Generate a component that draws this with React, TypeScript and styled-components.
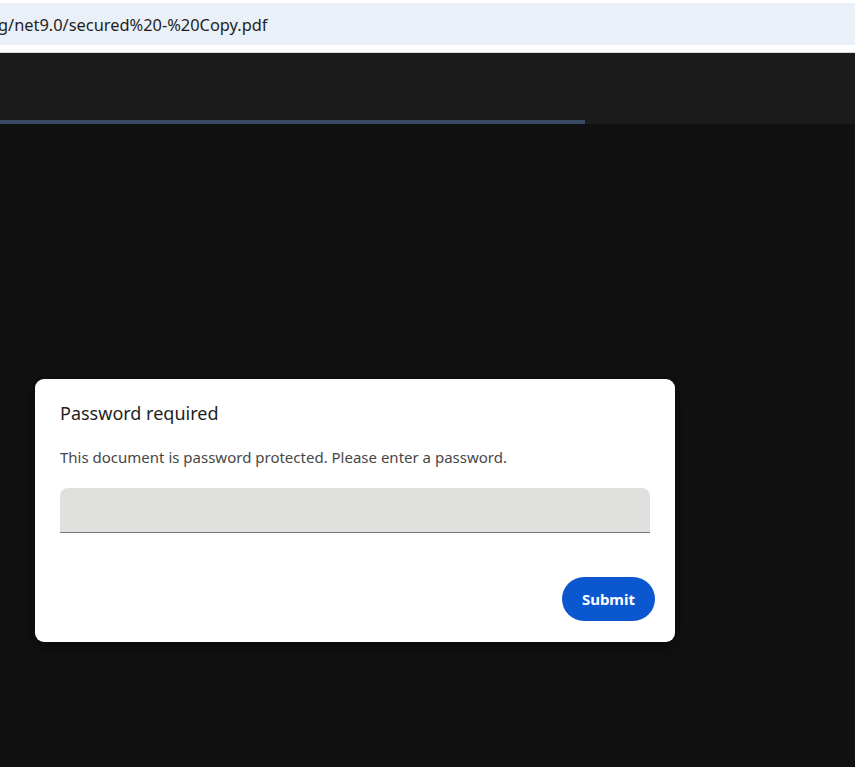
import * as React from 'react'
import styled, {createGlobalStyle} from 'styled-components'

const GlobalStyle = createGlobalStyle`
	html, body {
		margin: 0;
		padding: 0;
		height: 100%;
		background: #111111;
	}
	body {
		font-family: "Noto Sans", "Open Sans", sans-serif;
	}
	#root { height: 100%; }
`

const Page = styled.div`
	display: flex;
	flex-direction: column;
	height: 767px;
	overflow: hidden;
`
const AddressStrip = styled.div`
	background: #ffffff;
	padding-top: 3px;
	border-bottom: 1px solid #dadada;
`
const AddressBar = styled.div`
	height: 42px;
	background: #eaf0f8;
	display: flex;
	align-items: center;
	margin-bottom: 7px;
	font-size: 16.4px;
	color: #1f1f1f;
	white-space: nowrap;
	overflow: hidden;
	span {
		margin-left: -2px;
	}
`
const Toolbar = styled.div`
	height: 71px;
	background: #1b1b1b;
	display: flex;
	flex-direction: column;
	justify-content: flex-end;
`
const Progress = styled.div`
	height: 4px;
	background: #3b4a64;
`
const Viewer = styled.div`
	flex: 1;
	background: #111111;
	padding: 255px 0 0 35px;
`
const Dialog = styled.div`
	width: 640px;
	box-sizing: border-box;
	background: #ffffff;
	border-radius: 9px;
	padding: 20px 20px 21px 25px;
	box-shadow: 0 4px 16px rgba(0,0,0,0.5);
	display: flex;
	flex-direction: column;
`
const Title = styled.h2`
	margin: 0;
	font-size: 18px;
	font-weight: 400;
	color: #1f1f1f;
	line-height: 28px;
`
const Message = styled.p`
	margin: 20px 0 0;
	font-size: 15px;
	color: #474747;
	line-height: 20px;
`
const PasswordInput = styled.input`
	margin-top: 21px;
	width: 590px;
	height: 45px;
	box-sizing: border-box;
	border: none;
	border-bottom: 1px solid #747775;
	border-radius: 8px 8px 0 0;
	background: #e0e1df;
	outline: none;
	padding: 0 12px;
	font-size: 15px;
`
const Actions = styled.div`
	display: flex;
	justify-content: flex-end;
	margin-top: 44px;
`
const SubmitButton = styled.button`
	height: 44px;
	padding: 0 20px;
	border: none;
	border-radius: 22px;
	background: #0b57d0;
	color: #ffffff;
	font-family: inherit;
	font-size: 15px;
	font-weight: 700;
	cursor: pointer;
`

export default function App() {
	return (
		<Page>
			<GlobalStyle />
			<AddressStrip>
				<AddressBar><span>g/net9.0/secured%20-%20Copy.pdf</span></AddressBar>
			</AddressStrip>
			<Toolbar>
				<Progress style={{width: '585px'}} />
			</Toolbar>
			<Viewer>
				<Dialog>
					<Title>Password required</Title>
					<Message>This document is password protected. Please enter a password.</Message>
					<PasswordInput type="password" />
					<Actions>
						<SubmitButton>Submit</SubmitButton>
					</Actions>
				</Dialog>
			</Viewer>
		</Page>
	)
}
